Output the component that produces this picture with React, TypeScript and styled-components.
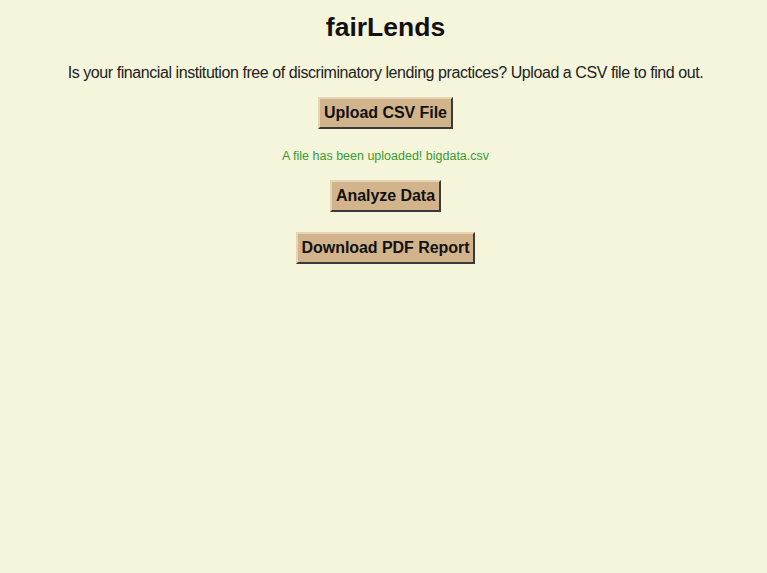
import styled, { createGlobalStyle } from 'styled-components';

const GlobalStyle = createGlobalStyle`
  html, body {
    margin: 0;
    padding: 0;
    background: #f5f5dc;
  }
  body {
    font-family: "Liberation Sans", Arial, sans-serif;
    color: #222;
  }
`;

const Page = styled.div`
  min-height: 573px;
  display: flex;
  flex-direction: column;
  align-items: center;
  padding: 12px 0 0 4px;
  box-sizing: border-box;
`;

const Title = styled.h1`
  margin: 0;
  font-size: 26.5px;
  line-height: 30px;
  font-weight: bold;
  color: #111;
`;

const Intro = styled.p`
  margin: 22px 0 0;
  font-size: 16px;
  line-height: 18px;
  letter-spacing: -0.43px;
  color: #222;
`;

const ActionButton = styled.button<{ $top: number }>`
  margin-top: ${(p) => p.$top}px;
  height: 32px;
  padding: 0 4px;
  background: #d2b48c;
  border: 2px solid;
  border-color: #e8d4b4 #3a3a3a #3a3a3a #e8d4b4;
  font-family: "Liberation Sans", Arial, sans-serif;
  font-size: 16px;
  font-weight: bold;
  letter-spacing: -0.05px;
  color: #111;
  cursor: pointer;
`;

const Status = styled.p`
  margin: 20px 0 0;
  font-size: 12.5px;
  line-height: 14px;
  color: #3a9a2e;
`;

export default function App() {
  return (
    <>
      <GlobalStyle />
      <Page>
        <Title>fairLends</Title>
        <Intro>
          Is your financial institution free of discriminatory lending practices? Upload a CSV file to find out.
        </Intro>
        <ActionButton $top={15}>Upload CSV File</ActionButton>
        <Status>A file has been uploaded! bigdata.csv</Status>
        <ActionButton $top={17}>Analyze Data</ActionButton>
        <ActionButton $top={20}>Download PDF Report</ActionButton>
      </Page>
    </>
  );
}
